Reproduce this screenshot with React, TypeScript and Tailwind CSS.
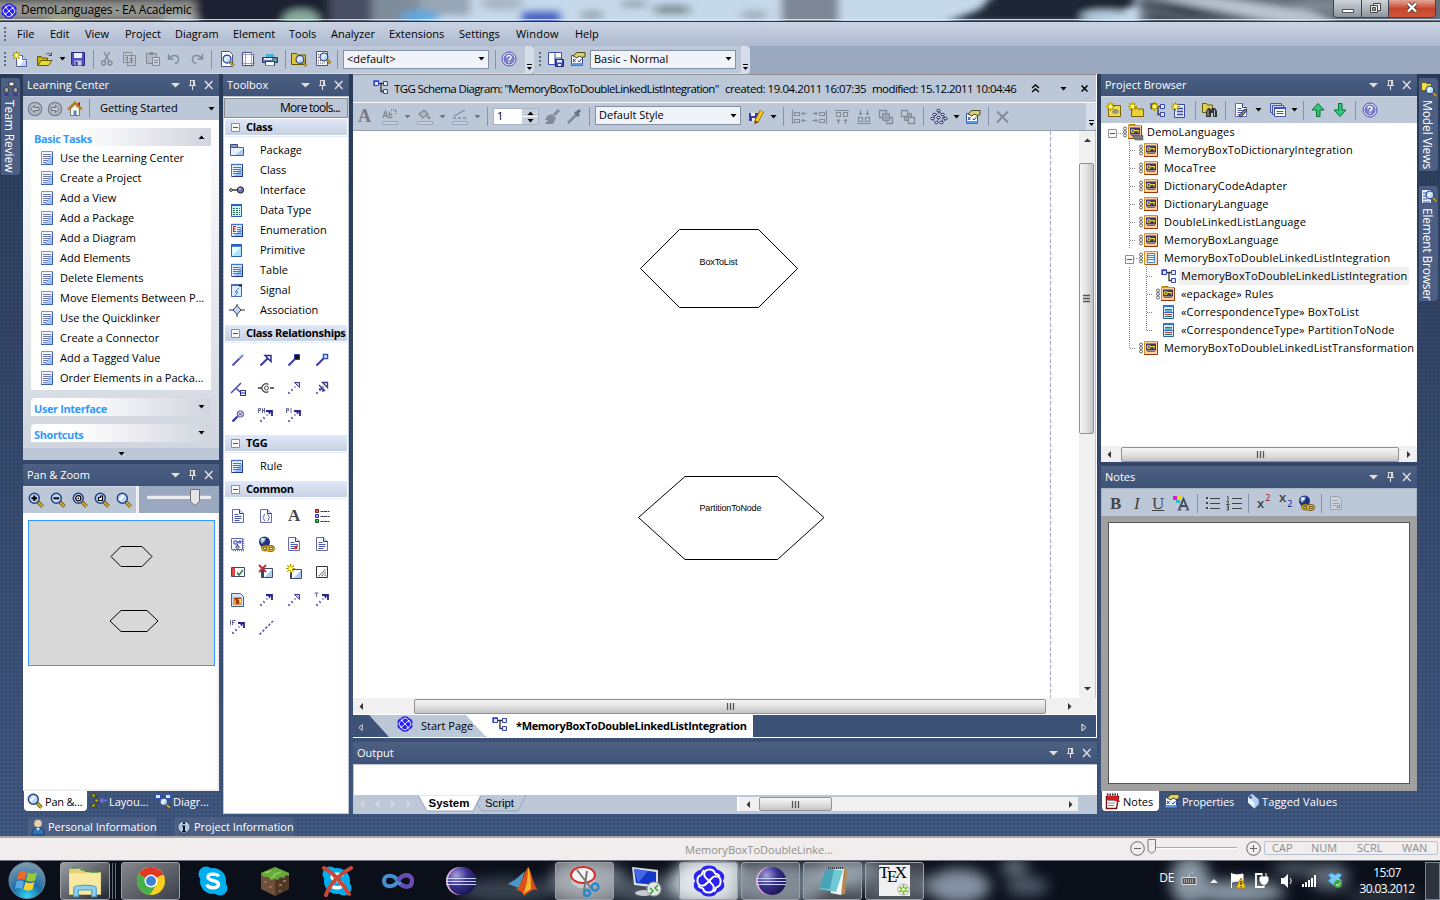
import React from "react";

/* ---------- icons ---------- */

const doc = (
  <>
    <path d="M2.5 1.5h7l4 4v9h-11z" fill="#fff" stroke="#6a6aa8" />
    <path d="M9.500 1.500v4h4" fill="#dfe6fb" stroke="#3a3a70" />
    <path d="M4.500 6.500h4M4.500 8.500h7M4.500 10.500h7M4.500 12.500h5" stroke="#4a5aa8" />
  </>
);
const mag = (inner?: React.ReactNode) => (
  <>
    <path d="M10 10l4.500 4.500" stroke="#5a4a10" strokeWidth="3.600" />
    <path d="M10 10l4.500 4.500" stroke="#d8ae20" strokeWidth="2" />
    <circle cx="6.300" cy="6.300" r="5" fill="#b9d8fa" stroke="#27407e" strokeWidth="1.500" />
    {inner ?? <path d="M3.500 8l4-4.500" stroke="#fff" strokeWidth="2" />}
  </>
);
const star = (
  <>
    <path d="M4.500 0v9M0 4.500h9M1.300 1.300l6.400 6.400M7.700 1.300l-6.400 6.400" stroke="#a89000" strokeWidth="1.200" />
    <circle cx="4.500" cy="4.500" r="2" fill="#fffbc0" stroke="#e8d800" />
  </>
);
const cls = (
  <>
    <path d="M2.500 2.500h11v12h-11z" fill="#e8f2ff" stroke="#3f74c8" />
    <path d="M13 5v9H5z" fill="#8fc2f4" />
    <path d="M4 5.500h8M4 7.500h8M4 9.500h8M4 11.500h8" stroke="#3c78c8" />
    <path d="M2 2.500h12" stroke="#3f74d0" strokeWidth="1.300" />
    <path d="M13.500 3v12M3 14.500h11" stroke="#22388c" />
  </>
);
const schema = (
  <>
    <path d="M5 4.500h6M8 4.500v8h3" stroke="#333" fill="none" strokeWidth="1.300" />
    <path d="M1.500 2.500h4v4h-4zM10.500 2.500h4v4h-4zM10.500 10.500h4v4h-4z" fill="#e4eeff" stroke="#3545b8" />
    <path d="M1 7V2h5" fill="none" stroke="#3038e0" strokeWidth="1.300" />
  </>
);
const globe = (
  <>
    <circle cx="6.500" cy="6" r="5.500" fill="#20308a" />
    <path d="M2 5c1-3 4-4 6-3l-1 3-3 3z" fill="#8fb8b8" />
    <circle cx="4.600" cy="3.600" r="1.500" fill="#e6f4fa" />
    <rect x="4.500" y="10" width="6" height="4" rx="2" fill="none" stroke="#5a4000" strokeWidth="2.400" />
    <rect x="9.500" y="10.500" width="6" height="4" rx="2" fill="none" stroke="#5a4000" strokeWidth="2.400" />
    <rect x="4.500" y="10" width="6" height="4" rx="2" fill="none" stroke="#e8b820" strokeWidth="1.100" />
    <rect x="9.500" y="10.500" width="6" height="4" rx="2" fill="none" stroke="#e8b820" strokeWidth="1.100" />
  </>
);
const chip = (
  <>
    <path d="M2.500 13.500l1-1M5.500 10.500l1-1" stroke="#3c3c9c" strokeWidth="2" />
    <path d="M8.500 7.500l1-1" stroke="#8a8ad0" strokeWidth="2" />
  </>
);
const dashArrow = (
  <>
    {chip}
    <path d="M8 3h6v5" fill="none" stroke="#25258e" strokeWidth="1.800" />
    <path d="M10 4.500l3-1-1 3z" fill="#25258e" />
  </>
);
const help = (
  <>
    <circle cx="8" cy="8" r="7" fill="#e6e8fb" stroke="#4a50b0" />
    <circle cx="8" cy="8" r="5" fill="#7d84cc" stroke="#5a60b8" />
    <path d="M6 6.500c0-3 4.200-2.600 4 0 0 1.400-2 1.400-2 3" fill="none" stroke="#fff" strokeWidth="1.400" />
    <path d="M7.300 10.700h1.400v1.400h-1.400z" fill="#fff" />
  </>
);
const props = (
  <>
    <path d="M1.500 4.500h11v10h-11z" fill="#fff" stroke="#2e4ea0" />
    <path d="M1.500 12h11v2.500h-11z" fill="#5a9ae8" />
    <path d="M3 8l2.500 3M5.500 8L3 11M8 9.500l1 1.500 2.500-3" stroke="#2030a0" fill="none" />
    <path d="M3 5l4-3.500h8v4l-3 1-3-1.500-2 2z" fill="#d8d078" stroke="#4a4818" />
  </>
);
const G = "#858b96";
const linkArrow = <path d="M2.500 13.500l8-8" stroke="#3a3aa6" strokeWidth="2" />;

const ICONS: Record<string, React.ReactNode> = {
  doc,
  schema,
  globe,
  cls,
  help,
  props,
  zoomIn: mag(<path d="M3.500 6.300h5.600M6.300 3.500v5.600" stroke="#000" strokeWidth="2" />),
  zoomOut: mag(<path d="M3.500 6.300h5.600" stroke="#000" strokeWidth="2" />),
  zoomFit: mag(<><circle cx="6.300" cy="6.300" r="2.600" fill="#fff" stroke="#000" strokeWidth="1.200" /><circle cx="6.300" cy="6.300" r=".9" fill="#000" /></>),
  zoomPage: mag(<path d="M4.500 8.500V5.500h2V4h2v4.500z" fill="#fff" stroke="#000" strokeWidth="1.200" />),
  mag: mag(),
  newDoc: (
    <>
      <path d="M4.500 4.500h6l4 4v7h-10z" fill="#fff" stroke="#5560a0" />
      <path d="M10.500 4.500v4h4" fill="#cfe0ff" stroke="#5560a0" />
      <path d="M11 10h3v5h-6z" fill="#b8d4fa" />
      {star}
    </>
  ),
  open: (
    <>
      <path d="M.500 14.500v-9h4l1 1.500h5v3" fill="#c8b400" stroke="#6a5c00" />
      <path d="M1 14.500l3-5h11l-3.500 5z" fill="#e8d838" stroke="#6a5c00" />
      <path d="M9 3.500c2-2 4-1.500 5 .500M14.500 1.500v3h-3" fill="none" stroke="#3a4a70" />
    </>
  ),
  save: (
    <>
      <path d="M1.500 1.500h13v13h-12l-1-1z" fill="#5050c0" stroke="#28288a" />
      <path d="M4 2h8v5h-8z" fill="#eef2ff" />
      <path d="M4.500 9.500h7v5h-7z" fill="#c8ccdc" />
      <path d="M5.500 10.500h2v4h-2z" fill="#28288a" />
    </>
  ),
  cut: (
    <>
      <path d="M5 1l5 9M10.500 1l-5 9" stroke={G} strokeWidth="1.500" />
      <circle cx="4.500" cy="12" r="2" fill="none" stroke={G} strokeWidth="1.400" />
      <circle cx="11" cy="12" r="2" fill="none" stroke={G} strokeWidth="1.400" />
    </>
  ),
  copy: (
    <path d="M1.500 1.500h8v10h-8zM5.500 4.500h8v10h-8zM7.500 7.500h4M7.500 9.500h4M7.500 11.500h4M3 4.500h2M3 6.500h2M3 8.500h2" fill="#c3c9d3" stroke={G} />
  ),
  paste: (
    <>
      <path d="M1.500 2.500h10v10h-10z" fill="#b4bac5" stroke={G} />
      <path d="M4.500 1h4v3h-4z" fill={G} />
      <path d="M7.500 6.500h7v8h-7zM9 9.500h4M9 11.500h4" fill="#ccd2dc" stroke={G} />
    </>
  ),
  undo: <path d="M2.500 3v5h5M3 7.500c3-4 9-4 9.500.500 0 2-1.500 4-3.500 4.500" fill="none" stroke={G} strokeWidth="1.400" />,
  redo: <path d="M13.500 3v5h-5M13 7.500c-3-4-9-4-9.500.500 0 2 1.500 4 3.500 4.500" fill="none" stroke={G} strokeWidth="1.400" />,
  preview: (
    <>
      <path d="M2.500.500h8l3 3v12h-11z" fill="#fff" stroke="#50508a" />
      <g transform="translate(3 3) scale(.8)">{mag()}</g>
    </>
  ),
  page: (
    <>
      <path d="M2.500 1.500h8l3 3v10h-11z" fill="#fff" stroke="#4a4a80" />
      <path d="M5.500 0v16M11.500 0v16M1 3.500h14M1 12.500h14" stroke="#7a7ab0" strokeWidth=".7" />
    </>
  ),
  print: (
    <>
      <path d="M4 3h8v3h-8z" fill="#48b0d0" />
      <path d="M.500 6.500h15v5h-15z" fill="#6a74a8" stroke="#303a6a" />
      <path d="M2 7h8v2h-8z" fill="#dfe4f4" />
      <path d="M12 8h2v2h-2z" fill="#20e040" />
      <path d="M3.500 10.500h9v4h-9z" fill="#fff" stroke="#303a6a" />
      <path d="M3 14.500h9" stroke="#30a8d8" />
    </>
  ),
  find: (
    <>
      <path d="M.500 13.500v-11h5l1 1.500h8v9.500z" fill="#e0c83c" stroke="#6a5800" />
      <g transform="translate(4 3.500) scale(.78)">{mag()}</g>
    </>
  ),
  find2: (
    <>
      <path d="M1.500.500h11v14h-11z" fill="#fff" stroke="#50508a" />
      <path d="M3 3.500h8M3 6.500h8M3 9.500h8M3 12h8" stroke="#555" strokeDasharray="1 1" />
      <g transform="translate(4 1) scale(.78)">{mag()}</g>
    </>
  ),
  layoutSave: (
    <>
      <path d="M.500 1.500h13v12h-13zM7 1.500v12M7 7h6.500" fill="#fff" stroke="#3a4ea8" />
      <path d="M7.500 8.500h8v7h-8z" fill="#4048b8" stroke="#202880" />
      <path d="M9 9h5v2.500h-5zM10 13h3v2h-3z" fill="#eef" />
    </>
  ),
  back: (
    <>
      <circle cx="8" cy="8" r="6.700" fill="#b4bac4" stroke="#777d88" strokeWidth="1.200" />
      <path d="M3.500 8l4-3.500v2h4.500v3H7.500v2z" fill="#c6ccd6" stroke="#6a707c" />
    </>
  ),
  fwd: (
    <>
      <circle cx="8" cy="8" r="6.700" fill="#b4bac4" stroke="#777d88" strokeWidth="1.200" />
      <path d="M12.500 8l-4-3.500v2H4v3h4.500v2z" fill="#c6ccd6" stroke="#6a707c" />
    </>
  ),
  home: (
    <>
      <path d="M3.500 8v6.500h9V8L8 3.500z" fill="#fdf6e0" stroke="#777" />
      <path d="M12 1.500v4" stroke="#a02020" strokeWidth="2" />
      <path d="M1 8.500l7-7 7 7" fill="none" stroke="#b87808" strokeWidth="2" />
      <path d="M6.500 9.500h3v5h-3z" fill="#5a80c8" />
    </>
  ),
  article: (
    <>
      <path d="M2.500 1.500h11v13h-11z" fill="#f2f6ff" stroke="#8a8fc8" />
      <path d="M13 5v9.500H5z" fill="#9cc4f4" />
      <path d="M13.500 2v12.500H2" fill="none" stroke="#3a60b8" />
      <path d="M4 4.500h8M4 6.500h8M4 8.500h7M4 10.500h5M4 12.500h3" stroke="#7078b0" />
    </>
  ),
  pkg: (
    <>
      <path d="M1.500 2.500h7v3h-7z" fill="#8a98c8" stroke="#3c4880" />
      <path d="M1.500 5.500h13v8h-13z" fill="#e8f2ff" stroke="#4c5890" />
      <path d="M14 7v6H6z" fill="#a4c8f4" />
    </>
  ),
  iface: (
    <>
      <path d="M3 8h7" stroke="#222" strokeWidth="1.300" />
      <circle cx="2" cy="8" r="1.400" fill="#fff" stroke="#222" />
      <circle cx="11.500" cy="8" r="3.200" fill="#74729a" stroke="#2c2a48" />
      <circle cx="10.800" cy="7" r="1" fill="#d0d0e8" />
    </>
  ),
  dtype: (
    <>
      <path d="M2.500 2.500h10v12h-10z" fill="#c8f4fa" stroke="#2a60b0" />
      <path d="M2 3h11" stroke="#2a60c0" strokeWidth="2" />
      <path d="M4 6.500h7M4 8.500h7M4 10.500h7M4 12.500h7" stroke="#306858" strokeDasharray="2 1" />
    </>
  ),
  enumr: (
    <>
      {cls}
      <path d="M3 4h5v7h-5z" fill="#fff" />
      <path d="M7 4.500H4.500v5H7M4.500 7h2.500" fill="none" stroke="#d02020" strokeWidth="1.200" />
    </>
  ),
  prim: (
    <>
      <path d="M2.500 2.500h10v12h-10z" fill="#a8e8fc" stroke="#2a60b0" />
      <path d="M3 5h9L3 14z" fill="#e4fbff" />
      <path d="M2 3.500h11" stroke="#2a60c0" strokeWidth="2.400" />
    </>
  ),
  signal: (
    <>
      <path d="M2.500 2.500h10v12h-10z" fill="#dcecff" stroke="#3a70b8" />
      <path d="M2 3h11" stroke="#4a70b0" strokeWidth="2" />
      <path d="M10 3.500h3" stroke="#102050" strokeWidth="2" />
      <path d="M10 6l-4 4h3l-3 4" fill="none" stroke="#4a78b8" />
    </>
  ),
  assoc: (
    <>
      <path d="M0 8h16M8 2v13" stroke="#333" />
      <path d="M8 3.500l4 4.500-4 4.500-4-4.500z" fill="#c0d4f4" stroke="#3a3a60" />
    </>
  ),
  l1: <><path d="M2.500 13.500l10-10" stroke="#4848a8" strokeWidth="1.800" /><path d="M9 7l4.500-4.500" stroke="#80b0c0" strokeWidth="1.500" /></>,
  l2: <>{linkArrow}<path d="M7 3.500h6v6z" fill="#fff" stroke="#25258e" strokeWidth="1.400" /></>,
  l3: <>{linkArrow}<path d="M8.500 2.500h5v5h-5z" fill="#111" stroke="#3a3aa6" /></>,
  l4: <>{linkArrow}<path d="M9.500 2.500h4v4h-4z" fill="#fff" stroke="#2a50a8" strokeWidth="1.500" /></>,
  l5: <><path d="M1 13L11 3M6 8l4 4" stroke="#4848a8" strokeWidth="1.500" /><path d="M10.500 10.500h5v5h-5zM11 13h4" fill="#fff" stroke="#25258e" /></>,
  l6: <><path d="M0 8h4M12 8h4" stroke="#333" strokeWidth="1.300" /><path d="M10.500 4.500a4.200 4.200 0 1 0 0 7" fill="none" stroke="#444" strokeWidth="1.200" /><circle cx="8.500" cy="8" r="2" fill="none" stroke="#444" /></>,
  l7: <>{chip}<path d="M8.500 2.500h5v5z" fill="#c0c8f0" stroke="#3c3c8c" /></>,
  l8: <>{chip}<path d="M8.500 2.500h5v5zM5 5l6 6M5 9h4v3" fill="none" stroke="#3c3c8c" strokeWidth="1.400" /></>,
  l9: <><path d="M2.500 13.500l5-5" stroke="#3a3aa6" strokeWidth="2.400" /><circle cx="10.300" cy="6" r="3.200" fill="#e6e6f8" stroke="#4a4a98" /><path d="M8.500 4.300l3.500 3.500M12 4.300L8.500 7.800" stroke="#4a4a98" /></>,
  ph: <>{dashArrow}<path d="M.500 5V.500h2v2h-2M4.500 0v5M6.500 0v5M4.500 2.500h2" fill="none" stroke="#555590" strokeWidth=".9" /></>,
  pi: <>{dashArrow}<path d="M.500 5V.500h2v2h-2M5 0v5" fill="none" stroke="#555590" strokeWidth=".9" /></>,
  tt: <>{dashArrow}<path d="M.500 1h4M2.500 1v4" fill="none" stroke="#555590" strokeWidth=".9" /></>,
  ift: <>{dashArrow}<path d="M.500 0v5M2.500 5V.500h3M2.500 2.500h2" fill="none" stroke="#555590" strokeWidth=".9" /></>,
  da: dashArrow,
  dl: <path d="M1.500 14.500L15 1" stroke="#3c3c9c" strokeWidth="1.300" strokeDasharray="2.500 1.700" />,
  braces: (
    <>
      <path d="M2.500 1.500h7l4 4v9h-11z" fill="#fff" stroke="#6a6aa8" />
      <path d="M9.500 1.500v4h4" fill="#dfe6fb" stroke="#3a3a70" />
      <path d="M7 6.500c-2 0-.5 2.500-2 3 1.500.5 0 3 2 3M9.500 6.500c2 0 .5 2.500 2 3-1.500.5 0 3-2 3" fill="none" stroke="#4a5aa8" />
    </>
  ),
  legend: (
    <>
      <path d="M1.500 1.500h3v3h-3z" fill="#f06040" stroke="#801818" />
      <path d="M1.500 6.500h3v3h-3z" fill="#90b0ff" stroke="#2838a0" />
      <path d="M1.500 11.500h3v3h-3z" fill="#30c050" stroke="#105828" />
      <path d="M6.500 3.500h9M6.500 8.500h9M6.500 13.500h9" stroke="#333355" strokeDasharray="3 .5" />
    </>
  ),
  dgm: (
    <>
      <path d="M1.500 2.500h11v11h-11z" fill="#fff" stroke="#5a6ab8" />
      <path d="M4 5h3v3H4zM9 5h2v2H9zM6 10h3v2H6zM7 6h2M7.500 8v2" fill="none" stroke="#3545a8" />
      <path d="M13.500 3v12M3 14.500h11" stroke="#4878d8" strokeDasharray="1 1" strokeWidth="1.500" />
    </>
  ),
  docRed: <>{doc}<path d="M12 8l-5 5h4z" fill="#e02020" /></>,
  check: (
    <>
      <path d="M1.500 3.500h13v9h-13z" fill="#fff" stroke="#404878" />
      <path d="M2 4h3v8h-3z" fill="#e04848" />
      <path d="M7 8.500l2 2.500 4-5" fill="none" stroke="#208038" strokeWidth="1.500" />
    </>
  ),
  del: (
    <>
      <path d="M3.500 4.500h11v9h-11z" fill="#fff" stroke="#404878" />
      <path d="M14 5v8H7z" fill="#a8ccf4" />
      <path d="M3 6h3v7.500H3z" fill="#3c4468" />
      <path d="M1 1l7 7M8 1L1 8" stroke="#e02020" strokeWidth="1.800" />
    </>
  ),
  newEl: (
    <>
      <path d="M4.500 5.500h11v9h-11z" fill="#fff" stroke="#404878" />
      <path d="M15 6v8H8z" fill="#a8ccf4" />
      <path d="M4 8h2v6.500H4z" fill="#3c4468" />
      {star}
    </>
  ),
  hatch: (
    <>
      <path d="M2.500 2.500h11v11h-11z" fill="#fff" stroke="#333" />
      <path d="M5 12l7-7M8 12l4-4M11 12l1-1" stroke="#555" strokeDasharray="1 1" strokeWidth="1.500" />
    </>
  ),
  image: (
    <>
      <path d="M1.500 1.500h9l3 3v10h-12z" fill="#cfe4fb" stroke="#3a60b0" />
      <path d="M3 5h9v8H3z" fill="#e8a038" />
      <path d="M4 6h7v2l-2 1v3H6V9z" fill="#a83818" />
      <path d="M8 7h3v4z" fill="#fae080" />
    </>
  ),
  abc: (
    <>
      <path d="M1 9L3.500 2 6 9M2 7h3M7.500 2.500v6h3M8 5.500h2" fill="none" stroke={G} strokeWidth="1.300" />
      <path d="M9 1h5v5" fill="none" stroke={G} strokeDasharray="1 1" strokeWidth="2" />
      <path d="M.500 12.500h15v3h-15z" fill="#c6cfdd" stroke="#98a6bc" />
    </>
  ),
  fill: (
    <>
      <path d="M2 5l5-4 4 4-5 4zM10 4l1 5h3" fill="#aeb6c2" stroke={G} strokeWidth="1.300" />
      <path d="M.500 12.500h15v3h-15z" fill="#c6cfdd" stroke="#98a6bc" />
    </>
  ),
  line: (
    <>
      <path d="M2 7l11-6M1 9h3M6 9h3M11 9h3" stroke={G} strokeWidth="1.300" />
      <path d="M.500 12.500h15v3h-15z" fill="#c6cfdd" stroke="#98a6bc" />
    </>
  ),
  brush: <><path d="M10 6l5-5" stroke={G} strokeWidth="3" /><path d="M3 7l5-2 4 4-3 6H1l3-4H1z" fill={G} /></>,
  dropper: <><path d="M2 14l8-8" stroke={G} strokeWidth="2.500" /><path d="M9 3l4 4M10 5l4-4" stroke="#6b717c" strokeWidth="3" /></>,
  savePen: (
    <>
      <path d="M0 4h9v8H0z" fill="#3c3ca8" />
      <path d="M2 4h4v3H2zM3 9h3v3H3z" fill="#eef" />
      <path d="M7 13L13 2" stroke="#805800" strokeWidth="4.500" />
      <path d="M7.300 12.500L13 2.200" stroke="#f8c820" strokeWidth="3" />
      <path d="M5.500 15.500l.5-4 3 1.500z" fill="#703800" />
    </>
  ),
  al1: <path d="M1.500 1v14M3.500 3.500h5v3h-5zM3.500 10.500h5v3h-5zM15.500 4.500H11M12.500 3L11 4.500 12.500 6M15.500 11.500H11M12.500 10L11 11.500l1.500 1.500" fill="none" stroke={G} strokeWidth="1.100" />,
  al2: <path d="M14.500 1v14M7.500 3.500h5v3h-5zM7.500 10.500h5v3h-5zM.500 4.500H5M3.500 3L5 4.500 3.500 6M.500 11.500H5M3.500 10L5 11.500 3.500 13" fill="none" stroke={G} strokeWidth="1.100" />,
  al3: <path d="M1 1.500h14M2.500 3.500h4v4h-4zM9.500 3.500h4v4h-4zM4.500 15v-4.500M3 12l1.500-1.500L6 12M11.500 15v-4.500M10 12l1.500-1.500L13 12" fill="none" stroke={G} strokeWidth="1.100" />,
  al4: <path d="M1 14.500h14M2.500 8.500h4v4h-4zM9.500 8.500h4v4h-4zM4.500 1v4.500M3 4l1.500 1.500L6 4M11.500 1v4.500M10 4l1.500 1.500L13 4" fill="none" stroke={G} strokeWidth="1.100" />,
  zf: <><path d="M1.500 1.500h7v7h-7zM8.500 8.500h6v6h-6z" fill="#bcc5d3" stroke={G} strokeWidth="1.300" /><path d="M4.500 4.500h7v7h-7z" fill="#9da4b0" stroke={G} /></>,
  zb: <><path d="M4.500 4.500h7v7h-7z" fill="#9da4b0" stroke={G} /><path d="M1.500 1.500h6v6h-6zM8.500 8.500h6v6h-6z" fill="#c2cad6" stroke={G} strokeWidth="1.300" /></>,
  tree: (
    <>
      <path d="M8 3L3 8l-1 2M8 3l5 4 1 3M3 8l-1 4M8 7l-1 5M12 8l-1 5M13 8l1 4" stroke="#222250" fill="none" strokeDasharray="1 .6" />
      {[[7, 1], [3, 5], [11, 5], [1, 9], [7, 8], [14, 9], [5, 13], [10, 13]].map(([x, y]) => (
        <ellipse key={`${x}-${y}`} cx={x + 0.5} cy={y + 0.5} rx="1.800" ry="1.200" fill="#d8defc" stroke="#20205a" strokeWidth=".9" />
      ))}
    </>
  ),
  x: <path d="M2 2.500l11 11M13 2.500l-11 11" stroke={G} strokeWidth="2" />,
  nModel: <><path d="M2.500 3.500h12v11h-12z" fill="#f0dc50" stroke="#7a6600" /><path d="M6 10c0-4 7-4 7 0 0 2-7 3-7 0z" fill="#98987a" />{star}</>,
  nPkg: <><path d="M3.500 14.500v-9h5l1 1.500h6v7.500z" fill="#ecd238" stroke="#7a6600" />{star}</>,
  nDgm: <>{schema}{star}</>,
  nElem: <><path d="M3.500 2.500h10v13h-10z" fill="#dfeaff" stroke="#3a48a0" /><path d="M6 6.500h6M6 9.500h6M6 12.500h6" stroke="#3a48a0" strokeWidth="1.500" />{star}</>,
  binoc: (
    <>
      <path d="M.500 10.500v-9h4l1 1.500h5v7.500z" fill="#e0d050" stroke="#6a5c00" />
      <path d="M4 15V9l2-3h2l1 2 1-2h3l2 3v6h-4v-4h-2v4z" fill="#333" />
      <path d="M6 8v6M12.500 8v6" stroke="#b0b8c8" />
    </>
  ),
  edit: <>{doc}<path d="M6 14l6-7 2 1.500-6 6.500z" fill="#888" stroke="#333" /></>,
  stack: <><path d="M.500 1.500h11v9h-11z" fill="#c8d4f4" stroke="#4a58a8" /><path d="M2.500 3.500h11v9h-11z" fill="#c8d4f4" stroke="#4a58a8" /><path d="M4.500 5.500h11v9h-11z" fill="#fff" stroke="#4a58a8" /><path d="M4 6h12" stroke="#2a58c8" strokeWidth="2" /><path d="M6.500 9.500h7M6.500 11.500h7" stroke="#4a58a8" /></>,
  up: <path d="M8 1.500l6 6.500h-4v6.500h-3.500V8H2z" fill="#30c878" stroke="#0a7038" />,
  down: <path d="M8 14.500L2 8h4.500V1.500H10V8h4z" fill="#30c878" stroke="#0a7038" />,
  corr: (
    <>
      <path d="M2.500 1.500h10v13h-10z" fill="#d4ecfd" stroke="#2a60b0" />
      <path d="M2 2h11" stroke="#3070d0" strokeWidth="2" />
      <path d="M2.500 8.500h10" stroke="#3070d0" />
      <path d="M4 5.500h7M4 10.500h7" stroke="#d03838" />
      <path d="M4 7h7M4 12.500h7" stroke="#207060" />
    </>
  ),
  fontA: (
    <>
      <path d="M0 1h4v4H0z" fill="#d020d0" /><path d="M5 1h4v3H5z" fill="#e8d820" /><path d="M3 5h4v3H3z" fill="#20c0d0" />
      <path d="M6 14.500L10.500 4 15 14.500M8 11h5" fill="none" stroke="#444b5e" strokeWidth="1.900" />
      <path d="M4.500 15h4M12.500 15h4" stroke="#444b5e" />
    </>
  ),
  ul: <path d="M1 2h2v2H1zM1 7h2v2H1zM1 12h2v2H1zM5 3h10v1H5zM5 8h10v1H5zM5 13h10v1H5z" fill="#444" />,
  ol: <><path d="M6 3.500h10M6 8.500h10M6 13.500h10" stroke="#444" /><path d="M1 1.500h1v4M.500 6.500h2v1.500l-2 1.500h3M.500 11h2v4h-2M1 13h1" fill="none" stroke="#444" /></>,
  docGray: <><path d="M2.500 1.500h8l3 3v10h-11z" fill="#ccd3de" stroke="#9aa3b2" /><path d="M4.500 5.500h5M4.500 8.500h7M4.500 10.500h5" stroke="#9aa3b2" /><path d="M12 9l-4 4h4z" fill="#8b93a2" /></>,
  layout: <><path d="M3 3.500h3M5 8.500h2M3 13.500h3" stroke="#222" strokeDasharray="1 1" /><path d="M1 1h3v3H1zM4 6h3v3H4zM1 11h3v3H1z" fill="#e0d820" stroke="#444400" /><path d="M8 7.500l4-3.500v2.500h4v2h-4V11z" fill="#6a70d0" /></>,
  dmag: <><path d="M.500 1.500h5v4h-5zM10.500 1.500h5v4h-5z" fill="#dfeaff" stroke="#3050c0" /><g transform="translate(4 4) scale(.75)">{mag()}</g></>,
  person: <><path d="M2 16c0-6 2-7 6-7s6 1 6 7z" fill="#2f74b8" stroke="#123a6a" /><path d="M6 9l2 3 2-3z" fill="#bfe0ff" /><circle cx="8" cy="4.500" r="3.800" fill="#e8d2b4" stroke="#b09a78" strokeWidth=".6" /></>,
  info: <><circle cx="8" cy="8" r="6.300" fill="#a9c6e4" stroke="#47536b" strokeWidth="1.400" /><path d="M7 3h2v2H7zM6 6.500h3V12h1v1H6v-1h1V7.500H6z" fill="#111" /></>,
  notes: <><path d="M1.500 3.500h12l-2 12h-10z" fill="#fff" stroke="#701010" strokeWidth="1.400" /><path d="M3 7.500h7M3 10h7M3 12.500h6" stroke="#888" /><path d="M2 3h10l3 6h-3l-3-2H2z" fill="#d81820" /><path d="M2 1.500h11" stroke="#222" strokeDasharray="1.500 1" strokeWidth="2" /></>,
  tag: <><path d="M3 4l4-3.500 7 6v5l-4.500 4L3 9.500z" fill="#b4d0f4" stroke="#4a68a8" strokeWidth=".7" /><path d="M3 4l6.500 6v5.500L3 9.500z" fill="#e8f2ff" /><circle cx="5.600" cy="4.300" r="1.200" fill="#445" /></>,
  team: <><path d="M6 1h5v4H6z" fill="#eee" stroke="#333" /><circle cx="3.500" cy="9" r="2.500" fill="#aaa" stroke="#333" /><circle cx="12.500" cy="9" r="2.500" fill="#aaa" stroke="#333" /><path d="M1 15c0-4 5-4 5 0zM10 15c0-4 5-4 5 0z" fill="#4038a8" /></>,
  mviews: <><path d="M.500 9.500v-8h4l1 1h5v7z" fill="#f0e040" stroke="#6a5c00" /><g transform="translate(4 4) scale(.78)">{mag()}</g></>,
  ebrow: <><path d="M.500.500h10v14h-10zM2 4h7M2 7h4M2 10h4M2 13h7" fill="#e8f0ff" stroke="#3050b0" /><g transform="translate(4 1) scale(.78)">{mag()}</g></>,
  ea: (
    <>
      <path d="M8 .300c2.200 0 3.400.7 4 2 1.700.6 3.600 1.600 3.600 3.600 0 .9-.3 1.500-.7 2.100.4.600.7 1.200.7 2.100 0 2-1.900 3-3.600 3.600-.6 1.300-1.800 2-4 2s-3.400-.7-4-2C2.300 13.100.400 12.100.400 10.100c0-.9.300-1.500.7-2.100-.4-.6-.7-1.200-.7-2.100 0-2 1.900-3 3.600-3.600.6-1.300 1.800-2 4-2z" fill="#2a22ee" />
      {[0, 90, 180, 270].map((a) => (
        <g key={a} transform={`rotate(${a} 8 8)`} fill="none" stroke="#fff">
          <path d="M8 8C7 6.800 5.600 6.400 5.600 4.700 5.600 3 6.800 2.200 8.200 2.200c1.500 0 2.600.8 2.800 2.200" strokeWidth="1" />
          <path d="M11 4.400c1 .1 1.900.5 2.300 1.300" strokeWidth="1" />
        </g>
      ))}
    </>
  ),
};

function Icon({ n, c = "" }: { n: string; c?: string }) {
  return (
    <svg viewBox="0 0 16 16" fill="none" className={`h-4 w-4 shrink-0 overflow-visible ${c}`}>
      {ICONS[n]}
    </svg>
  );
}

/* ---------- small pieces ---------- */

const Sep = ({ c = "" }) => <i className={`h-[19px] w-px shrink-0 bg-[#8592a8] ${c}`} />;
const Arrow = ({ c = "", f = "#000" }) => (
  <svg viewBox="0 0 7 4" className={`h-1 w-[7px] shrink-0 ${c}`}>
    <path d="M.500 0h6l-3 3.600z" fill={f} />
  </svg>
);
const Grip = ({ c = "" }) => (
  <svg viewBox="0 0 3 15" className={`h-[15px] w-[3px] shrink-0 ${c}`}>
    <path d="M1 0v15" stroke="#5c6b84" strokeWidth="2" strokeDasharray="2 2" />
  </svg>
);
const Overflow = ({ c = "" }) => (
  <div className={`flex flex-col items-center justify-end rounded-r-sm bg-[#d5dcea] pb-1 ${c}`}>
    <i className="mb-0.5 h-px w-[5px] bg-black" />
    <svg viewBox="0 0 5 3" className="h-[3px] w-[5px]"><path d="M0 0h5L2.500 3z" /></svg>
  </div>
);
const Combo = ({ t, c = "" }: { t: string; c?: string }) => (
  <div className={`flex h-[19px] w-[146px] shrink-0 items-center justify-between border border-[#8591a2] bg-[#f0f3f8] pr-[3px] pl-[3px] ${c}`}>
    <span className="pb-0.5">{t}</span>
    <Arrow />
  </div>
);
function PanelHead({ t }: { t: string }) {
  return (
    <div className="flex h-[22px] shrink-0 items-center bg-linear-to-b from-[#4d6082] to-[#3e5378] pr-1.5 pb-0.5 pl-1 text-white">
      <span className="grow">{t}</span>
      <svg viewBox="0 0 42 12" className="mt-px h-3 w-[42px]" fill="none">
        <path d="M0 4h9l-4.500 4.500z" fill="#e6dcd4" />
        <path d="M19.500 6.500v-5h4v5M18 6.500h7M21.500 7v4M22.500 2v4" stroke="#e0dcdc" strokeWidth="1.100" />
        <path d="M34 2l7.500 8M41.500 2L34 10" stroke="#e0dcdc" strokeWidth="1.500" />
      </svg>
    </div>
  );
}
const Thumb = ({ c = "" }) => (
  <div className={`flex items-center justify-center rounded-[2px] border border-[#929292] bg-linear-to-b from-[#f6f6f6] via-[#e2e2e2] to-[#c3c3c6] ${c}`}>
    <svg viewBox="0 0 9 7" className="h-[7px] w-[9px]"><path d="M1.500 0v7M4.500 0v7M7.500 0v7" stroke="#555" strokeWidth="1.300" /></svg>
  </div>
);
const Tri = ({ d, c = "" }: { d: string; c?: string }) => (
  <svg viewBox="0 0 7 7" className={`h-[7px] w-[7px] shrink-0 ${c}`}><path d={d} fill="#333" /></svg>
);
const LEFT = "M5 0v7L1.500 3.500z";
const RIGHT = "M2 0v7l3.500-3.500z";
const UP = "M0 5h7L3.500 1.500z";
const DOWN = "M0 2h7L3.500 5.500z";
const Minus = ({ c = "" }) => (
  <svg viewBox="0 0 9 9" className={`h-[9px] w-[9px] shrink-0 ${c}`}>
    <path d="M.500.500h8v8h-8z" fill="#fafafa" stroke="#8f8f8f" />
    <path d="M2 4.500h5" stroke="#3a50a0" />
  </svg>
);

/* ---------- title, menu, toolbars ---------- */

function TitleBar() {
  return (
    <div className="relative flex h-[22px] shrink-0 items-center overflow-hidden border-b border-[#30343c] bg-[#aebccb]">
      <svg viewBox="0 0 1440 22" preserveAspectRatio="none" className="absolute inset-0 h-full w-full">
        <defs><filter id="tb" x="-5%" y="-200%" width="110%" height="500%"><feGaussianBlur stdDeviation="4" /></filter></defs>
        <rect width="1440" height="22" fill="#c6d9eb" />
        <g filter="url(#tb)">
          <rect x="-20" y="-20" width="355" height="70" fill="#1a2033" />
          <rect x="-20" y="1" width="215" height="20" fill="#93938f" />
          <ellipse cx="62" cy="20" rx="16" ry="4" fill="#a9b48c" />
          <ellipse cx="180" cy="20" rx="18" ry="6" fill="#aab3b8" />
          <rect x="330" y="-20" width="45" height="70" fill="#4a5064" />
          <rect x="372" y="-20" width="50" height="70" fill="#7f8c9b" />
          <rect x="420" y="-20" width="50" height="36" fill="#97a6b5" />
          <ellipse cx="301" cy="21" rx="18" ry="11" fill="#88ab9f" />
          <ellipse cx="420" cy="17" rx="20" ry="6" fill="#5fa8e2" />
          <ellipse cx="502" cy="3" rx="22" ry="8" fill="#a9b7c4" />
          <rect x="522" y="12" width="38" height="14" fill="#4a63c4" />
          <ellipse cx="592" cy="16" rx="12" ry="5" fill="#98a8b2" />
          <ellipse cx="634" cy="4" rx="14" ry="4" fill="#93a6ae" />
          <ellipse cx="672" cy="10" rx="20" ry="5" fill="#7e9298" />
          <ellipse cx="754" cy="16" rx="14" ry="6" fill="#a5b3c2" />
          <rect x="782" y="-20" width="56" height="70" fill="#7b8694" />
          <path d="M945 24l35-14 25-30h130v24l-30 20z" fill="#1d2836" />
          <ellipse cx="1105" cy="17" rx="24" ry="6" fill="#b9d2e2" />
          <rect x="1140" y="-20" width="320" height="70" fill="#65707d" />
          <path d="M1150-4l60 0 100 16 30 14-60-2z" fill="#bac4ce" />
          <path d="M1150 14l70 10h-70z" fill="#39424f" />
          <path d="M1120 2l60 4 70 16-60-6z" fill="#262e3a" />
          <ellipse cx="1320" cy="6" rx="30" ry="6" fill="#7d8893" />
        </g>
        <path d="M0 20.500h1440" stroke="#dfe6ee" />
      </svg>
      <Icon n="ea" c="relative ml-px" />
      <span className="relative ml-1 pb-px text-[12px] tracking-[-0.17px] text-black">DemoLanguages - EA Academic</span>
      <div className="relative mr-1 ml-auto flex h-[18px] self-start overflow-hidden rounded-b border border-t-0 border-[#3c4450]">
        <div className="flex w-7 items-center justify-center border-r border-[#3c4450] bg-linear-to-b from-[#cfd5da] to-[#8d969f]">
          <i className="mt-1 h-1 w-3 border border-[#555] bg-white" />
        </div>
        <div className="flex w-[27px] items-center justify-center border-r border-[#3c4450] bg-linear-to-b from-[#cfd5da] to-[#8d969f]">
          <svg viewBox="0 0 12 12" className="mb-0.5 h-3 w-3"><path d="M4.500 1.500h7v7h-7z" fill="#eee" stroke="#444" /><path d="M1.500 3.500h7v7h-7z" fill="#eee" stroke="#444" /><path d="M3.500 5.500h3v3h-3z" fill="#aaa" stroke="#444" /></svg>
        </div>
        <div className="flex w-[46px] items-center justify-center bg-linear-to-b from-[#e2a79a] via-[#c6452c] to-[#d0543a]">
          <svg viewBox="0 0 12 11" className="mb-0.5 h-[11px] w-3"><path d="M2 1.500l8 8M10 1.500l-8 8" stroke="#444" strokeWidth="4" /><path d="M2 1.500l8 8M10 1.500l-8 8" stroke="#fff" strokeWidth="2.400" /></svg>
        </div>
      </div>
    </div>
  );
}

function MenuBar() {
  return (
    <div className="flex h-6 shrink-0 items-center bg-linear-to-b from-[#cad3e3] to-[#aebacf] pl-1 text-[11px] [&_span]:pb-0.5">
      <Grip />
      <span className="ml-[10px] w-[33px]">File</span>
      <span className="w-[35px]">Edit</span>
      <span className="w-10">View</span>
      <span className="w-[50px]">Project</span>
      <span className="w-[58px]">Diagram</span>
      <span className="w-[56px]">Element</span>
      <span className="w-[42px]">Tools</span>
      <span className="w-[58px]">Analyzer</span>
      <span className="w-[70px]">Extensions</span>
      <span className="w-[57px]">Settings</span>
      <span className="w-[59px] tracking-[0.2px]">Window</span>
      <span>Help</span>
    </div>
  );
}

function ToolBars() {
  return (
    <div className="flex h-7 shrink-0 bg-[#9ba9c0]">
      <div className="flex w-[525px] items-center border-b border-[#d5dcea] bg-[#bcc7d8] pb-px pl-1">
        <Grip />
        <Icon n="newDoc" c="ml-[5px]" />
        <Icon n="open" c="ml-[9px]" />
        <Arrow c="ml-1.5" />
        <Icon n="save" c="ml-1" />
        <Sep c="ml-[7px]" />
        <Icon n="cut" c="ml-[5px]" />
        <Icon n="copy" c="ml-[7px]" />
        <Icon n="paste" c="ml-[7px]" />
        <Icon n="undo" c="ml-[5px]" />
        <Icon n="redo" c="ml-[7px]" />
        <Sep c="ml-1.5" />
        <Icon n="preview" c="ml-[7px]" />
        <Icon n="page" c="ml-[5px]" />
        <Icon n="print" c="ml-1.5" />
        <Sep c="ml-[7px]" />
        <Icon n="find" c="ml-[5px]" />
        <Icon n="find2" c="ml-2" />
        <Sep c="ml-1.5" />
        <Combo t="<default>" c="ml-[5px]" />
        <Sep c="ml-1.5" />
        <Icon n="help" c="ml-[5px]" />
      </div>
      <Overflow c="w-[9px]" />
      <div className="flex w-[207px] items-center border-b border-[#d5dcea] bg-[#bcc7d8] pb-px pl-[5px]">
        <Grip />
        <Icon n="layoutSave" c="ml-1.5" />
        <Icon n="props" c="ml-1.5" />
        <Combo t="Basic - Normal" c="ml-1" />
      </div>
      <Overflow c="w-[9px]" />
    </div>
  );
}

/* ---------- left panels ---------- */

const TASKS = [
  "Use the Learning Center", "Create a Project", "Add a View", "Add a Package", "Add a Diagram", "Add Elements",
  "Delete Elements", "Move Elements Between P...", "Use the Quicklinker", "Create a Connector", "Add a Tagged Value",
  "Order Elements in a Packa...",
];

const SectionHead = ({ t, up, c = "" }: { t: string; up?: boolean; c?: string }) => (
  <div className={`flex h-[18px] shrink-0 items-center justify-between bg-linear-to-r from-white from-25% to-[#d2d5df] pr-[6px] pl-[3px] font-bold text-[#3399ff] ${c}`}>
    <span className="pt-0.5 tracking-[-0.4px]">{t}</span>
    <Arrow c={up ? "rotate-180" : ""} />
  </div>
);

function LearningCenter() {
  return (
    <section className="flex h-[386px] shrink-0 flex-col">
      <PanelHead t="Learning Center" />
      <div className="flex h-6 shrink-0 items-center border-t border-[#d0d8e6] bg-[#bcc7d8] pl-1">
        <Icon n="back" />
        <Icon n="fwd" c="ml-1" />
        <Icon n="home" c="ml-1" />
        <Sep c="ml-1.5" />
        <span className="ml-[10px] grow pb-0.5">Getting Started</span>
        <Arrow c="mr-1" />
      </div>
      <div className="flex h-[328px] flex-col bg-linear-to-b from-white to-[#d0d5df] px-2 pt-2">
        <SectionHead t="Basic Tasks" up />
        <ul className="h-[244px] bg-white pt-0.5">
          {TASKS.map((t) => (
            <li key={t} className="flex h-5 items-center pl-2 whitespace-nowrap">
              <Icon n="article" />
              <span className="ml-[5px] pb-0.5">{t}</span>
            </li>
          ))}
        </ul>
        <SectionHead t="User Interface" c="mt-2 rounded-tl" />
        <SectionHead t="Shortcuts" c="mt-2 rounded-tl" />
      </div>
      <div className="flex h-3 items-center justify-center bg-[#bcc7d8]"><Arrow /></div>
    </section>
  );
}

function PanZoom() {
  return (
    <section className="mt-1 flex h-[327px] shrink-0 flex-col">
      <PanelHead t="Pan & Zoom" />
      <div className="flex h-[27px] shrink-0 bg-[#9ba9c0]">
        <div className="flex w-[113px] items-center gap-1.5 border-t border-[#d0d8e6] bg-[#bcc7d8] pl-[5px]">
          <Icon n="zoomIn" /><Icon n="zoomOut" /><Icon n="zoomFit" /><Icon n="zoomPage" /><Icon n="mag" />
        </div>
        <i className="w-[3px] bg-[#f0f0f0]" />
        <svg viewBox="0 0 80 27" className="h-[27px] w-20">
          <path d="M8 11h64" stroke="#e9ecf0" strokeWidth="4" /><path d="M8 9.500h64" stroke="#b8b8b8" />
          <path d="M51.500 3.500h9v12l-4.500 4-4.500-4z" fill="#e4e4e4" stroke="#707070" />
        </svg>
      </div>
      <div className="h-[278px] border-r-2 border-b-2 border-[#f0f0f0] bg-white pt-[7px] pl-[5px]">
        <svg viewBox="0 0 187 146" className="h-[146px] w-[187px]">
          <rect x=".5" y=".5" width="186" height="145" fill="#d8d8d8" stroke="#3399ff" />
          <g fill="none" stroke="#000">
            <path d="M83 36.500l10-10h21l10 10-10 10H93z" />
            <path d="M82 101l11-10.500h26l11 10.500-11 10.500H93z" />
          </g>
        </svg>
      </div>
    </section>
  );
}

function LeftTabs() {
  return (
    <div className="flex h-5 shrink-0 items-center whitespace-nowrap text-white">
      <div className="ml-px flex h-5 w-[63px] items-center rounded-b-sm bg-white pl-[3px] text-black">
        <Icon n="mag" /><span className="ml-0.5 tracking-[-0.2px]">Pan &...</span>
      </div>
      <Icon n="layout" c="ml-1" /><span className="ml-0.5 w-[44px]">Layou...</span>
      <Icon n="dmag" c="ml-0.5" /><span className="ml-[2px]">Diagr...</span>
    </div>
  );
}

/* ---------- toolbox ---------- */

const GroupHead = ({ t }: { t: string }) => (
  <div className="mx-px mb-px h-[18px] shrink-0 border-b border-[#e4ecf8]">
    <div className="flex h-4 items-center bg-linear-to-b from-[#dfe9f8] to-[#c6d1e3] pl-1.5 font-bold">
      <Minus /><span className="ml-1.5 pb-0.5 tracking-[-0.3px] whitespace-nowrap">{t}</span>
    </div>
  </div>
);
const TOOLS = [
  ["pkg", "Package"], ["cls", "Class"], ["iface", "Interface"], ["dtype", "Data Type"], ["enumr", "Enumeration"],
  ["prim", "Primitive"], ["cls", "Table"], ["signal", "Signal"], ["assoc", "Association"],
];
const ToolItem = ({ i, t }: { i: string; t: string }) => (
  <li className="flex h-5 items-center pl-[5px]"><Icon n={i} /><span className="ml-[15px] pb-0.5">{t}</span></li>
);
const REL = ["l1", "l2", "l3", "l4", "l5", "l6", "l7", "l8", "l9", "ph", "pi"];
const COMMON = [
  "doc", "braces", "A", "legend", "dgm", "globe", "docRed", "doc", "check", "del", "newEl", "hatch", "image", "da", "l7",
  "tt", "ift", "dl",
];

function Toolbox() {
  return (
    <section className="ml-1 flex h-[740px] w-[126px] flex-col">
      <PanelHead t="Toolbox" />
      <div className="flex grow flex-col border border-[#bcc7d8] bg-white">
        <div className="mt-px flex h-[20px] shrink-0 items-center justify-end border border-[#8c8c8c] bg-[#bcc7d8] pr-[7px] text-[12px] tracking-[-0.75px]">More tools...</div>
        <div className="h-px shrink-0" />
        <GroupHead t="Class" />
        <ul className="mt-[2px] shrink-0">{TOOLS.map(([i, t]) => <ToolItem key={t} i={i} t={t} />)}</ul>
        <div className="h-[5px] shrink-0" />
        <GroupHead t="Class Relationships" />
        <div className="grid shrink-0 grid-cols-[repeat(4,28px)] grid-rows-[repeat(3,28px)] items-center pt-[2px] pl-1.5">
          {REL.map((n) => <Icon key={n} n={n} />)}
        </div>
        <div className="h-[5px] shrink-0" />
        <GroupHead t="TGG" />
        <ul className="mt-[2px] shrink-0"><ToolItem i="cls" t="Rule" /></ul>
        <div className="h-[5px] shrink-0" />
        <GroupHead t="Common" />
        <div className="grid shrink-0 grid-cols-[repeat(4,28px)] grid-rows-[repeat(5,28px)] items-center pt-[2px] pl-1.5">
          {COMMON.map((n, k) =>
            n === "A" ? (
              <span key={k} className="pl-0.5 font-['Liberation_Serif',serif] text-[17px] leading-4 font-bold text-[#444]">A</span>
            ) : (
              <Icon key={k} n={n} />
            ),
          )}
        </div>
      </div>
    </section>
  );
}

/* ---------- centre ---------- */

function DiagramToolbar() {
  return (
    <div className="flex h-7 shrink-0 items-center border-b border-[#98a0ac] bg-[#bcc7d8] pl-[5px]">
      <span className="w-4 pb-0.5 font-['Liberation_Serif',serif] text-[18px] font-bold text-[#757b86]">A</span>
      <Icon n="abc" c="ml-2" />
      <Arrow c="ml-1.5" f="#777" />
      <Icon n="fill" c="ml-1.5" />
      <Arrow c="ml-1.5" f="#777" />
      <Icon n="line" c="ml-1.5" />
      <Arrow c="ml-1.5" f="#777" />
      <Sep c="ml-1.5" />
      <div className="ml-[5px] flex h-[17px] w-[46px] items-center border border-[#a8b4c6] bg-white pl-[3px]">
        <span className="grow pb-0.5">1</span>
        <div className="flex h-full w-4 flex-col gap-px bg-white">
          <div className="flex h-[7px] items-center justify-center bg-[#c6d0df]"><Arrow c="rotate-180" /></div>
          <div className="flex h-[7px] items-center justify-center bg-[#c6d0df]"><Arrow /></div>
        </div>
      </div>
      <Icon n="brush" c="ml-[5px]" />
      <Icon n="dropper" c="ml-1.5" />
      <Sep c="ml-[7px]" />
      <Combo t="Default Style" c="-mt-0.5 ml-[5px]" />
      <Icon n="savePen" c="ml-2" />
      <Arrow c="ml-[5px]" />
      <Sep c="ml-1.5" />
      <Icon n="al1" c="ml-[7px]" />
      <Icon n="al2" c="ml-[5px]" />
      <Icon n="al3" c="ml-1.5" />
      <Icon n="al4" c="ml-1.5" />
      <Icon n="zf" c="ml-1.5" />
      <Icon n="zb" c="ml-1.5" />
      <Sep c="ml-[7px]" />
      <Icon n="tree" c="ml-[7px]" />
      <Arrow c="ml-1.5" />
      <Icon n="props" c="ml-[5px]" />
      <Sep c="ml-[7px]" />
      <Icon n="x" c="ml-[6px]" />
      <Overflow c="ml-auto h-full w-[10px]" />
    </div>
  );
}

function Canvas() {
  return (
    <div className="flex h-[567px] shrink-0">
      <svg viewBox="353 131 726 567" className="h-[567px] w-[726px] shrink-0 bg-white">
        <g fill="#fff" stroke="#000">
          <path d="M640.500 268.500l39-39h79l39 39-39 39h-79z" />
          <path d="M638.500 517.500l46.500-41h92.500l46.500 41-46.500 42H685z" />
        </g>
        <g fontFamily="Liberation Sans, sans-serif" fontSize="9" fill="#000">
          <text x="699.500" y="265" textLength="38">BoxToList</text>
          <text x="699.500" y="511" textLength="62">PartitionToNode</text>
        </g>
        <path d="M1050.500 131v567" stroke="#a8a8d0" strokeDasharray="4 2" />
      </svg>
      <div className="flex w-4 flex-col items-center bg-[#f0f0f0] py-1.5">
        <Tri d={UP} />
        <div className="mt-[19px] flex h-[271px] w-[15px] items-center justify-center self-start rounded-[2px] border border-[#929292] bg-linear-to-r from-[#f6f6f6] via-[#e2e2e2] to-[#c3c3c6]">
          <svg viewBox="0 0 7 9" className="h-[9px] w-[7px]"><path d="M0 1.500h7M0 4.500h7M0 7.500h7" stroke="#555" strokeWidth="1.300" /></svg>
        </div>
        <Tri d={DOWN} c="mt-auto" />
      </div>
    </div>
  );
}

function Center() {
  return (
    <div className="ml-1 flex w-[744px] flex-col">
      <section className="flex h-[664px] shrink-0 flex-col border-r border-white bg-[#bcc7d8]">
        <div className="flex h-7 shrink-0 items-center border-t border-[#909090] pl-5">
          <Icon n="schema" c="-mt-1" />
          <div className="ml-[5px] flex text-[11.5px] whitespace-nowrap">
            <span className="w-[331px] tracking-[-0.63px]">TGG Schema Diagram: "MemoryBoxToDoubleLinkedListIntegration"</span>
            <span className="w-[147px] tracking-[-0.45px]">created: 19.04.2011 16:07:35</span>
            <span className="tracking-[-0.57px]">modified: 15.12.2011 10:04:46</span>
          </div>
          <svg viewBox="0 0 9 9" className="ml-auto h-[9px] w-[9px]"><path d="M1 4l3.500-3L8 4M1 8l3.500-3L8 8" fill="none" stroke="#000" strokeWidth="1.400" /></svg>
          <Arrow c="ml-5" />
          <svg viewBox="0 0 7 7" className="mr-2 ml-[14px] h-[7px] w-[7px]"><path d="M.500.500l6 6M6.500.500l-6 6" stroke="#000" strokeWidth="1.500" /></svg>
        </div>
        <i className="h-px shrink-0 bg-white" />
        <DiagramToolbar />
        <Canvas />
        <div className="flex h-[17px] shrink-0 items-center border-b border-white bg-[#f0f0f0] pl-[5px]">
          <Tri d={LEFT} />
          <Thumb c="ml-[49px] h-[15px] w-[632px]" />
          <Tri d={RIGHT} c="ml-5" />
        </div>
        <div className="flex h-[23px] shrink-0 items-center border-b border-white bg-[#3d5277]">
          <svg viewBox="0 0 7 10" className="mx-[5px] mt-1 h-[10px] w-[6px]"><path d="M5 1v7L1 4.500z" fill="none" stroke="#eee" /></svg>
          <div className="flex h-[22px] w-[116px] items-center bg-[#bcc7d8] pl-[28px] whitespace-nowrap [clip-path:polygon(0_0,100%_0,100%_100%,20px_100%)]">
            <Icon n="ea" c="-mt-1" /><span className="ml-[8px] pb-px">Start Page</span>
          </div>
          <div className="-ml-[19px] flex h-[22px] w-[287px] items-center bg-white pl-[26px] font-bold whitespace-nowrap [clip-path:polygon(0_0,100%_0,100%_100%,20px_100%)]">
            <Icon n="schema" c="-mt-1" /><span className="ml-[8px] pb-px tracking-[-0.33px]">*MemoryBoxToDoubleLinkedListIntegration</span>
          </div>
          <svg viewBox="0 0 7 10" className="mt-1 mr-[8px] ml-auto h-[10px] w-[7px]"><path d="M1 1v7l4-3.500z" fill="none" stroke="#eee" /></svg>
        </div>
      </section>
      <section className="mt-1 flex h-[72px] shrink-0 flex-col">
        <PanelHead t="Output" />
        <div className="h-[31px] border-t border-l border-[#bcc7d8] bg-white" />
        <div className="flex h-[19px] items-start bg-[#bcc7d8]">
          <svg viewBox="0 0 200 19" className="h-[19px] w-[200px]">
            <path d="M5 5v8M11 5v8L7 9zM26 5v8l-4-4zM38 5v8l4-4zM54 5v8l4-4zM60 5v8" fill="#d3d5da" stroke="#d3d5da" strokeWidth=".6" />
            <path d="M128 1l-4 8 5 7h36l8-16" fill="none" stroke="#98a6bc" />
            <path d="M65 0l9 16h46l8-16z" fill="#fff" stroke="#98a6bc" />
            <path d="M65 -.500h63" stroke="#fff" strokeWidth="2" />
            <g fontFamily="Liberation Sans, sans-serif" fontSize="11.500">
              <text x="75.500" y="12" fontWeight="bold" textLength="41">System</text>
              <text x="132" y="12" textLength="29" lengthAdjust="spacingAndGlyphs">Script</text>
            </g>
          </svg>
          <div className="mt-0.5 ml-[184px] flex h-[14px] w-[341px] items-center border-l-2 border-white bg-[#f0f0f0] pl-[6px]">
            <Tri d={LEFT} />
            <Thumb c="ml-[7px] h-[14px] w-[73px]" />
            <Tri d={RIGHT} c="mr-1 ml-auto" />
          </div>
        </div>
      </section>
    </div>
  );
}

/* ---------- right panels ---------- */

function Key({ kind }: { kind: string }) {
  return (
    <svg viewBox="0 0 20 16" className="h-4 w-5 shrink-0 overflow-visible" fill="none">
      <circle cx="2" cy="4.500" r="1.500" stroke="#666" /><circle cx="2" cy="8" r="1.500" stroke="#666" /><circle cx="2" cy="11.500" r="1.500" stroke="#666" />
      {kind === "list" ? (
        <>
          <path d="M5.500 1.500h13v13h-13z" fill="#fbdcb4" stroke="#d09820" />
          <path d="M18.500 2v12.500H6" stroke="#a85018" />
          <path d="M8.500 3.500h7v9h-7z" fill="#e8f4ff" stroke="#4888c8" /><path d="M9 5.500h6M9 7.500h6M9 9.500h6" stroke="#4888c8" />
        </>
      ) : (
        <>
          {kind !== "pkg" && <path d="M6 2V.500h6l1 1.500" fill="#f0c820" stroke="#b08000" />}
          <path d="M5.500 1.500h13v13h-13z" fill="#fcd0a0" stroke="#d09820" />
          <path d="M7 3.500h10v7H7z" fill="#3c3870" />
          <path d="M8 11.500h8" stroke="#8c6a58" />
          <circle cx="9.700" cy="7" r="1.500" stroke="#f8e020" strokeWidth="1.200" /><path d="M11.200 6.500h4v2" stroke="#f8e020" strokeWidth="1.200" />
          <path d="M18.500 2v12.500H5" stroke="#9c3808" />
          {kind === "root" && <path d="M9 11.500h11v4.500h-8z" fill="#777" stroke="#555" strokeWidth=".6" />}
        </>
      )}
    </svg>
  );
}
const Dots = ({ d, w = 17 }: { d: string; w?: number }) => (
  <svg viewBox={`0 0 ${w} 18`} width={w} height={18} className="shrink-0"><path d={d} stroke="#808080" strokeDasharray="1 1" fill="none" /></svg>
);
const V = "M.500 0v18";
const T = "M.500 0v18M1 9.500h6";
const L = "M.500 0v9.500M1 9.500h6";
const MemRow = ({ t, kind = "pkg", d = T }: { t: string; kind?: string; d?: string }) => (
  <li className="flex h-[18px] items-center pl-7">
    {kind === "list" ? <div className="-ml-1 flex w-[14px] items-center"><Minus c="mt-0.5" /><Dots w={3} d="M0 9.500h3" /></div> : <Dots w={10} d={d} />}
    <Key kind={kind} />
    <span className="ml-[5px]">{t}</span>
  </li>
);

function ProjectBrowser() {
  return (
    <section className="flex h-[388px] shrink-0 flex-col">
      <PanelHead t="Project Browser" />
      <div className="flex h-[27px] shrink-0 items-center border-t border-[#d0d8e6] bg-[#bcc7d8] pl-[5px]">
        <Icon n="nModel" />
        <Icon n="nPkg" c="ml-1.5" />
        <Icon n="nDgm" c="ml-1.5" />
        <Icon n="nElem" c="ml-[5px]" />
        <Sep c="ml-2" />
        <Icon n="binoc" c="ml-1.5" />
        <Sep c="ml-[7px]" />
        <Icon n="edit" c="ml-[7px]" />
        <Arrow c="ml-1.5" />
        <Icon n="stack" c="ml-2" />
        <Arrow c="ml-[5px]" />
        <Sep c="ml-[5px]" />
        <Icon n="up" c="ml-1.5" />
        <Icon n="down" c="ml-1.5" />
        <Sep c="ml-[7px]" />
        <Icon n="help" c="ml-1.5" />
      </div>
      <ul className="h-[323px] bg-white tracking-[0.16px] whitespace-nowrap [&_span]:pb-0.5">
        <li className="flex h-[18px] items-center pl-[7px]">
          <Minus c="mt-0.5" /><Dots w={6} d="M1 10.500h5" /><Key kind="root" /><span className="ml-1">DemoLanguages</span>
        </li>
        <MemRow t="MemoryBoxToDictionaryIntegration" />
        <MemRow t="MocaTree" />
        <MemRow t="DictionaryCodeAdapter" />
        <MemRow t="DictionaryLanguage" />
        <MemRow t="DoubleLinkedListLanguage" />
        <MemRow t="MemoryBoxLanguage" />
        <MemRow t="MemoryBoxToDoubleLinkedListIntegration" kind="list" />
        <li className="flex h-[18px] items-center pl-7">
          <Dots d={V} /><Dots w={15} d={T} /><Icon n="schema" />
          <span className="ml-[2px] flex h-full items-center bg-[#f0f0f0] px-[2px]">MemoryBoxToDoubleLinkedListIntegration</span>
        </li>
        <li className="flex h-[18px] items-center pl-7"><Dots d={V} /><Dots w={10} d={T} /><Key kind="fold" /><span className="ml-[5px]">«epackage» Rules</span></li>
        <li className="flex h-[18px] items-center pl-7"><Dots d={V} /><Dots w={15} d={T} /><Icon n="corr" /><span className="ml-1">«CorrespondenceType» BoxToList</span></li>
        <li className="flex h-[18px] items-center pl-7"><Dots d={V} /><Dots w={15} d={L} /><Icon n="corr" /><span className="ml-1">«CorrespondenceType» PartitionToNode</span></li>
        <MemRow t="MemoryBoxToDoubleLinkedListTransformation" d={L} />
      </ul>
      <div className="flex h-4 shrink-0 items-center bg-[#f0f0f0] pl-[5px]">
        <Tri d={LEFT} /><Thumb c="ml-2 h-[15px] w-[278px]" /><Tri d={RIGHT} c="ml-1.5" />
      </div>
    </section>
  );
}

function Notes() {
  return (
    <section className="mt-1 flex h-[325px] shrink-0 flex-col">
      <PanelHead t="Notes" />
      <div className="flex h-7 shrink-0 items-center border border-b-0 border-[#a9b6ca] bg-[#bcc7d8] pt-px pl-2 font-['Liberation_Serif',serif] text-[17px] text-[#444]">
        <span className="w-[22px] font-bold">B</span>
        <span className="w-[20px] pl-0.5 italic">I</span>
        <span className="w-[21px] underline">U</span>
        <Icon n="fontA" />
        <Sep c="ml-2" />
        <Icon n="ul" c="ml-[7px]" />
        <Icon n="ol" c="ml-[5px]" />
        <Sep c="ml-[6px]" />
        <span className="ml-[8px] flex w-4 font-['Open_Sans',sans-serif] text-[13px] leading-4 font-semibold">x<span className="-mt-[5px] ml-px text-[9px] font-normal text-[#a01010]">2</span></span>
        <span className="-mt-1.5 ml-1.5 flex w-4 font-['Open_Sans',sans-serif] text-[13px] leading-4 font-semibold">x<span className="mt-[7px] ml-px text-[9px] font-normal text-[#1010a0]">2</span></span>
        <Icon n="globe" c="ml-[3px]" />
        <Sep c="ml-[7px]" />
        <Icon n="docGray" c="ml-1.5" />
      </div>
      <div className="grow bg-[#a0a0a0] px-[7px] pt-1.5 pb-[7px]"><div className="h-full border border-[#555] bg-white" /></div>
    </section>
  );
}

const SideTab = ({ i, t, c = "" }: { i: string; t: string; c?: string }) => (
  <div className={`flex w-[19px] flex-col items-center rounded-r-sm bg-[#4b5f84] pt-[3px] text-[12px] text-white ${c}`}>
    <Icon n={i} />
    <span className="mt-[3px] mr-1 whitespace-nowrap [writing-mode:vertical-rl]">{t}</span>
  </div>
);

/* ---------- bottom ---------- */

function StatusBar() {
  return (
    <div className="flex h-6 shrink-0 items-center border-t-2 border-[#a8a8a8] bg-[#f0edec] text-[11px] text-[#8f8f8f]">
      <span className="ml-[685px] w-[445px]">MemoryBoxToDoubleLinke...</span>
      <svg viewBox="0 0 134 20" className="mb-1 h-5 w-[134px]" fill="none">
        <path d="M22 10.500h85" stroke="#aaa" /><path d="M22 11.500h85" stroke="#fff" />
        <circle cx="7.500" cy="11.500" r="6.800" stroke="#666" /><path d="M4 11.500h7" stroke="#666" />
        <circle cx="123.500" cy="11.500" r="6.800" stroke="#666" /><path d="M120 11.500h7M123.500 8v7" stroke="#666" />
        <path d="M18 2.500h7.500v11l-3.700 3-3.800-3z" fill="#eee" stroke="#777" />
      </svg>
      <div className="mb-0.5 flex h-[14px] w-[174px] items-center rounded-[2px] border border-[#b4c2d8] pb-0.5 text-[11px]">
        <span className="ml-[7px] w-[39px]">CAP</span><span className="w-[46px]">NUM</span><span className="w-[45px]">SCRL</span><span>WAN</span>
      </div>
    </div>
  );
}

const TBtn = ({ children, c = "" }: { children?: React.ReactNode; c?: string }) => (
  <div className={`flex h-[38px] items-center justify-center rounded-[3px] border border-[#9aa0a8] ${c}`}>{children}</div>
);
const Big = ({ children, c = "" }: { children?: React.ReactNode; c?: string }) => (
  <svg viewBox="0 0 32 32" className={`h-8 w-8 shrink-0 ${c}`} fill="none">{children}</svg>
);
const Eclipse = () => (
  <>
    <defs><radialGradient id="ec" cx=".3" cy=".3" r=".8"><stop offset="0" stopColor="#a8a0e0" /><stop offset=".5" stopColor="#38308c" /><stop offset="1" stopColor="#18144c" /></radialGradient></defs>
    <circle cx="15" cy="16" r="14" fill="#e8a8d8" /><circle cx="17" cy="16" r="14" fill="url(#ec)" />
    <path d="M1 13.500h30M1 16.500h30M1 19.500h30" stroke="#c8d4f8" strokeWidth="1.200" />
  </>
);
const Skype = () => (
  <>
    <circle cx="16" cy="16" r="13" fill="#00aff0" /><circle cx="9" cy="9" r="7.500" fill="#00aff0" /><circle cx="23" cy="23" r="7.500" fill="#00aff0" />
    <path d="M21.500 11.500c-1-3-10.500-3.500-10.500.5 0 4.500 10.500 2.500 10.500 7.500 0 4.500-10.500 4-11.500 0" stroke="#fff" strokeWidth="3.400" />
  </>
);

function Taskbar() {
  return (
    <div className="relative flex h-10 shrink-0 items-center overflow-hidden border-t border-[#70757c] bg-[#0a0f1a] text-[12px] text-white">
      <svg viewBox="0 0 1440 40" className="absolute inset-0 h-full w-full">
        <defs><filter id="wb" x="-20%" y="-100%" width="140%" height="300%"><feGaussianBlur stdDeviation="7" /></filter></defs>
        <g filter="url(#wb)">
          <ellipse cx="500" cy="30" rx="50" ry="12" fill="#3a4452" />
          <ellipse cx="585" cy="20" rx="40" ry="20" fill="#6a7480" />
          <ellipse cx="660" cy="30" rx="60" ry="14" fill="#4a5462" />
          <ellipse cx="710" cy="20" rx="40" ry="24" fill="#c0ccd4" />
          <ellipse cx="780" cy="24" rx="50" ry="22" fill="#626e7c" />
          <ellipse cx="850" cy="14" rx="40" ry="14" fill="#768492" />
          <ellipse cx="900" cy="24" rx="40" ry="16" fill="#323c4a" />
          <ellipse cx="965" cy="26" rx="32" ry="18" fill="#8592a2" />
          <ellipse cx="1022" cy="6" rx="14" ry="8" fill="#6d7a88" />
          <ellipse cx="1035" cy="26" rx="22" ry="10" fill="#4d5a68" />
          <ellipse cx="1202" cy="20" rx="20" ry="26" fill="#8997a4" />
          <ellipse cx="1250" cy="32" rx="50" ry="12" fill="#8a98a6" />
          <ellipse cx="1310" cy="8" rx="24" ry="6" fill="#5a6672" />
          <ellipse cx="1345" cy="16" rx="20" ry="14" fill="#5e6a77" />
          <ellipse cx="1400" cy="36" rx="40" ry="6" fill="#38424e" />
        </g>
      </svg>
      <div className="relative flex items-center">
        <svg viewBox="0 0 40 40" className="ml-[7px] h-10 w-10">
          <defs><radialGradient id="orb" cx=".5" cy=".95" r=".9"><stop offset="0" stopColor="#30d8f8" /><stop offset=".45" stopColor="#1b6fa8" /><stop offset="1" stopColor="#7a98ac" /></radialGradient></defs>
          <circle cx="20" cy="19.500" r="18" fill="url(#orb)" stroke="#6e8a9c" />
          <path d="M12 11c3-1.500 5-1.500 7.500 0l-2 8c-2-1.500-5-1.500-7.500 0z" fill="#f06828" />
          <path d="M21 11.500c3 1.500 6 1.500 9 0l-2 8c-3 1.500-6 1.500-9 0z" fill="#98c838" />
          <path d="M9.500 20.500c3-1.500 5-1.500 7.500 0l-2 7.500c-2-1.500-5-1.500-7 0z" fill="#58a8e8" />
          <path d="M18.500 21c3 1.500 6 1.500 9 0l-2 7.500c-3 1.500-6 1.500-9 0z" fill="#fcd030" />
        </svg>
        <TBtn c="ml-[13px] w-[50px] bg-linear-to-br from-white/60 to-white/10">
          <Big c="h-9 w-9">
            <path d="M2 5h12l2 3h14v20H2z" fill="#e6cf78" /><path d="M4 4h6M12 6h7M20 8h8" stroke="#38a048" strokeWidth="1.500" />
            <path d="M2 9h28v19H2z" fill="#f8e8a0" /><path d="M6 30v-8c0-3 20-3 20 0v8h-4v-6H10v6z" fill="#8cd0ec" stroke="#4a9cc8" />
          </Big>
        </TBtn>
        <i className="ml-0.5 h-9 w-px bg-[#666c74]" /><i className="ml-[2px] h-9 w-px bg-[#666c74]" />
        <TBtn c="ml-[5px] w-[59px] bg-linear-to-br from-white/50 to-white/20">
          <Big>
            <circle cx="16" cy="16" r="14" fill="#fcd020" />
            <path d="M16 16L3.900 9A14 14 0 0 1 28.100 9z" fill="#e03828" /><path d="M16 16L3.900 9A14 14 0 0 0 15 30l6-10z" fill="#48b048" />
            <path d="M16 9h12.500" stroke="#e03828" strokeWidth="2" />
            <circle cx="16" cy="16" r="6.500" fill="#fff" /><circle cx="16" cy="16" r="5" fill="#3c80d8" />
          </Big>
        </TBtn>
        <Big c="ml-[17px]"><Skype /></Big>
        <Big c="ml-[30px]">
          <path d="M2 8l14-6 14 6v16l-14 7-14-7z" fill="#70503a" /><path d="M16 15l14-7v16l-14 7z" fill="#503626" />
          <path d="M2 8l14-6 14 6v3l-3-1-2 3-4-1-2 3-3-1-4 1-3-3-4 0-3-3z" fill="#66a83c" /><path d="M6 8l6-2M14 10l8-3M12 13l4-2" stroke="#8cd058" strokeWidth="1.500" />
          <path d="M5 17h3M10 22h3M20 20h3M24 16h3M20 26h2" stroke="#94705a" strokeWidth="2" />
        </Big>
        <Big c="ml-[30px]"><Skype /><path d="M3 3c8 4 18 14 25 26M30 3C20 8 9 18 5 30" stroke="#c8483c" strokeWidth="4" strokeLinecap="round" /></Big>
        <Big c="ml-[29px]"><path d="M16 16c-4-7-14-7-14 0s10 7 14 0 14-8 14 0-10 7-14 0z" stroke="#4890cc" strokeWidth="4" /><path d="M16 16c4-8 14-8 14 0s-8 6-11 3" stroke="#6a48b0" strokeWidth="4" /></Big>
        <Big c="ml-[31px]"><Eclipse /></Big>
        <Big c="ml-[30px]"><path d="M1 19l8-5 9-8-6 17z" fill="#4a98c4" /><path d="M9 25c5-4 8-18 12-23 3 2 5 18 10 23-5-2-9 2-14 6-2-4-4-6-8-6z" fill="#d85018" /><path d="M21 2c0 8-1 20-5 27 3-2 6-4 8-5 0-8-1-18-3-22z" fill="#f8b830" /></Big>
        <TBtn c="ml-4 w-[59px] bg-white/40">
          <Big><ellipse cx="14" cy="15" rx="12" ry="8" fill="#c8ccd0" /><ellipse cx="14" cy="10" rx="12" ry="8" fill="#f4f4f6" stroke="#d83028" strokeWidth="2" /><path d="M8 5l14 18M18 6l-3 20" stroke="#777" strokeWidth="2" /><circle cx="26" cy="22" r="3.500" stroke="#2888c8" strokeWidth="2.500" /><circle cx="18" cy="28" r="3" stroke="#2888c8" strokeWidth="2.500" /></Big>
        </TBtn>
        <Big c="ml-4"><path d="M2 2l26 3v18L4 20z" fill="#d8dce0" /><path d="M4 4l22 3v13L6 18z" fill="#1438c8" /><path d="M4 4l14 2L8 18z" fill="#4468e8" /><ellipse cx="14" cy="28" rx="9" ry="3" fill="#c8ccd0" /><circle cx="24" cy="24" r="7" fill="#e4e6e4" stroke="#999" /><path d="M20 23l3 3-3 3M28 20l-3 3 3 3" stroke="#38a038" strokeWidth="1.500" /></Big>
        <TBtn c="ml-[17px] w-[59px] bg-white/50"><Icon n="ea" c="scale-200" /></TBtn>
        <TBtn c="ml-[3px] w-[59px] bg-white/20"><Big><Eclipse /></Big></TBtn>
        <TBtn c="ml-[3px] w-[59px] bg-white/25"><Big><path d="M27 4l3 1-2 24-5 1z" fill="#b88848" /><path d="M9 4l18 0-3 26-10-2z" fill="#f0f6f8" /><path d="M9 4l17 1-7 22-17-3z" fill="#70c8d4" /><path d="M9 4l8 0-4 20-11-1z" fill="#48a4b8" /><path d="M11 3h16" stroke="#444" strokeWidth="2" strokeDasharray="1 1" /></Big></TBtn>
        <TBtn c="ml-[3px] w-[59px] bg-white/20">
          <div className="relative h-[31px] w-[31px] bg-[#f0f0f0] font-['Liberation_Serif',serif] text-[17px] leading-[16px] tracking-[-2.5px] text-black">
            T<span className="relative top-[4px]">E</span>X
            <svg viewBox="0 0 14 14" className="absolute right-0 bottom-0 h-[13px] w-[13px]"><circle cx="7" cy="7" r="6" fill="#f4f4f4" stroke="#aaa" /><path d="M7 2v10M2.700 4.500l8.600 5M11.300 4.500l-8.600 5" stroke="#78b820" strokeWidth="2" /><circle cx="7" cy="7" r="1.500" fill="#fff" /></svg>
          </div>
        </TBtn>
      </div>
      <span className="relative mb-[5px] ml-auto tracking-[-0.3px]">DE</span>
      <svg viewBox="1180 870 164 22" className="relative mt-px ml-1.5 h-[22px] w-[164px] shrink-0" fill="none">
        <path d="M1182 877.500h14v7h-14zM1189 877c0-3 2-4 4-4" fill="#555" stroke="#ddd" /><path d="M1184 880h10M1184 882h10" stroke="#eee" strokeDasharray="1 1" />
        <path d="M1210 883h8l-4-4z" fill="#eee" />
        <path d="M1231.500 873v15M1232 874l5 1 6-1v8l-6-1-5 1z" fill="#fff" stroke="#fff" /><path d="M1241 878l5 10h-10z" fill="#f8d020" stroke="#a88000" /><path d="M1241 881v4M1241 886v1" stroke="#000" />
        <path d="M1262 874h-6v13h8" stroke="#fff" strokeWidth="1.800" /><path d="M1260 877h8v4l-2 3h-4l-2-3zM1262 873v4M1266 873v4M1264 884v4" fill="#fff" stroke="#fff" />
        <path d="M1281 878h3l4-4v14l-4-4h-3z" fill="#fff" /><path d="M1290 878c1.500 2 1.500 4 0 6" stroke="#fff" />
        <path d="M1303 884v3M1306 882v5M1309 880v7M1312 878v9M1315 875v12" stroke="#fff" strokeWidth="2" />
        <path d="M1328 875l4-2 3 2 3-2 4 2-3 3 3 3-7 5-7-5 3-3z" fill="#7cc8f4" stroke="#3890d0" /><circle cx="1338" cy="884" r="4" fill="#38a838" /><path d="M1336 884l1.500 2 3-3.500" stroke="#fff" />
      </svg>
      <div className="relative mr-[10px] ml-[15px] w-[56px] shrink-0 text-center leading-[16px] tracking-[-0.6px] whitespace-nowrap">15:07<br />30.03.2012</div>
      <i className="relative h-[38px] w-[15px] border border-[#7b858f] bg-white/15" />
    </div>
  );
}

export default function App() {
  return (
    <div className="flex h-[900px] w-[1440px] flex-col overflow-hidden font-['Open_Sans','Noto_Sans',sans-serif] text-[11px] leading-none text-black">
      <TitleBar />
      <MenuBar />
      <ToolBars />
      <div className="flex h-[762px] shrink-0 flex-col bg-[radial-gradient(rgba(20,32,56,.2)_0.8px,transparent_1px),linear-gradient(#2b3c59,#40577f)] bg-size-[4px_4px,100%_100%]">
        <div className="flex h-[743px] shrink-0">
          <div className="w-[23px] pt-1"><SideTab i="team" t="Team Review" c="ml-px h-[97px] tracking-[-0.1px]" /></div>
          <div className="flex w-[196px] flex-col"><LearningCenter /><PanZoom /><LeftTabs /></div>
          <Toolbox />
          <Center />
          <div className="ml-1 flex w-[316px] flex-col">
            <ProjectBrowser />
            <Notes />
            <div className="flex h-5 items-center text-white">
              <div className="ml-px flex h-5 w-[57px] items-center rounded-b-sm bg-white pl-[3px] text-black"><Icon n="notes" /><span className="ml-0.5">Notes</span></div>
              <Icon n="props" c="ml-[5px]" /><span className="ml-0.5 w-[63px] tracking-[-0.1px]">Properties</span>
              <Icon n="tag" /><span className="ml-[1px] tracking-[0.15px]">Tagged Values</span>
            </div>
          </div>
          <div className="pt-1 pl-[2px]">
            <SideTab i="mviews" t="Model Views" c="h-[93px] tracking-[-0.1px]" />
            <SideTab i="ebrow" t="Element Browser" c="mt-[15px] h-[115px] tracking-[-0.2px]" />
          </div>
        </div>
        <div className="flex h-[19px] text-white">
          <div className="ml-7 flex w-[129px] items-center rounded-t-sm bg-[#4b5f84] pl-0.5"><Icon n="person" /><span className="ml-0.5">Personal Information</span></div>
          <div className="ml-[17px] flex w-[120px] items-center rounded-t-sm bg-[#4b5f84] pl-0.5"><Icon n="info" /><span className="ml-0.5">Project Information</span></div>
        </div>
      </div>
      <StatusBar />
      <Taskbar />
    </div>
  );
}
